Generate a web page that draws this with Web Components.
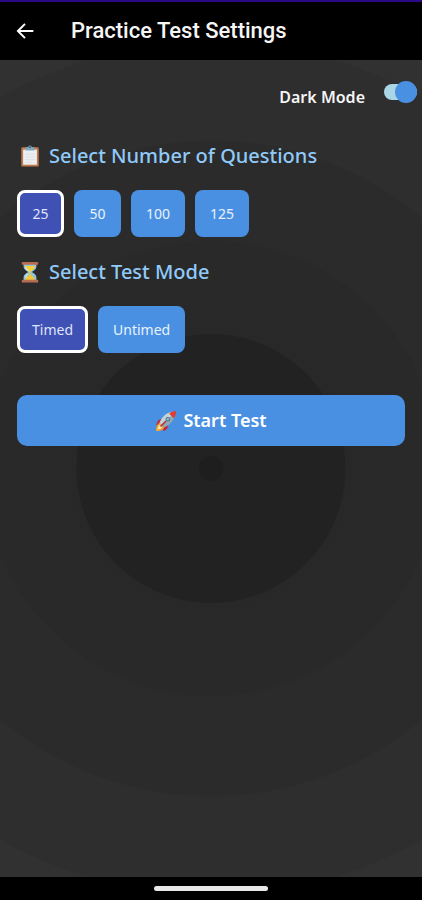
<!DOCTYPE html>
<html lang="en">
<head>
<meta charset="utf-8">
<meta name="viewport" content="width=device-width, initial-scale=1">
<title>Practice Test Settings</title>
<style>
html, body { margin: 0; }
body { font-family: "Noto Sans", "Open Sans", sans-serif; color: #fff; background: #000; }
</style>
</head>
<body>
<settings-screen></settings-screen>
<script>
const define = (name, html, setup) => {
  const template = document.createElement('template');
  template.innerHTML = html;
  customElements.define(name, class extends HTMLElement {
    connectedCallback() {
      if (this.shadowRoot) return;
      const root = this.attachShadow({ mode: 'open' });
      root.append(template.content.cloneNode(true));
      if (setup) setup(this, root);
    }
  });
};

const icons = {
  back: '<path d="M22 12H4M12 3.500L3.500 12L12 20.500" fill="none" stroke="#fff" stroke-width="2.400"/>',
  clipboard: '<rect x="2.500" y="2.500" width="19" height="21" rx="1.500" fill="#c27a4d"/><path d="M4.500 5h15v16.500h-15z" fill="#eceff1"/><path d="M7 10h10M7 13h10M7 16h10M7 19h7" stroke="#d5dadd" stroke-width=".8"/><path d="M7 6V3.500q0-1 1-1h2a2 2 0 0 1 4 0h2q1 0 1 1V6z" fill="#7fa9bd"/><circle cx="12" cy="2.300" r="1" fill="#345"/>',
  hourglass: '<path d="M5 3h14v3c0 3-2 4-5 6 3 2 5 3 5 6v3H5v-3c0-3 2-4 5-6-3-2-5-3-5-6z" fill="#8ec5d8"/><path d="M6.500 5.500h11c0 3-3 4-5 6.500h-1c-2-2.500-5-3.500-5-6.500z" fill="#f7cf3d"/><path d="M11.500 12h1l.8 4c2 1 4 2 4 4.500H6.700c0-2.500 2-3.500 4-4.500z" fill="#fbc52d"/><path d="M7 7c1 2 2 3 3.500 4M7 18c.5-2 1.500-3 3-4" fill="none" stroke="#d3f1f7" stroke-width="1.200"/><rect x="3" y="1" width="18" height="3" rx="1" fill="#b76d51"/><rect x="3" y="20.500" width="18" height="3" rx="1" fill="#b76d51"/>',
  rocket: '<path d="M8 10c-4-.5-6 3-6.500 7l5-2z" fill="#c62839"/><path d="M14 16c.5 4-2 6-5 7l-.5-5z" fill="#c62839"/><path d="M5.500 14c-3 1-4.500 4-4.500 9 4 0 8-1 9-4z" fill="#f4a02c"/><path d="M5.500 16c-2 1-2.500 3-2.800 5.200 2 0 4.300-.7 5.300-2.700z" fill="#ffe6a0"/><path d="M5 14C8 7 13 2 22 2c0 9-5 14-12 17z" fill="#8fa9b4"/><path d="M5 14C8 7 13 2 22 2L7.500 16.500z" fill="#c3d3d9"/><path d="M15.500 4c2-2 4.500-3 7.500-3 0 3-.8 5.500-2.500 8z" fill="#e23b30"/><circle cx="14" cy="10" r="2.400" fill="#536b79"/><circle cx="14" cy="10" r="1.300" fill="#87c8e8"/><path d="M12 12L6 18" stroke="#b92d3c" stroke-width="1.800"/>'
};

define('ui-icon', `<style>
  :host { display: inline-flex; flex: none; width: 22px; height: 22px; }
  svg { width: 100%; height: 100%; }
</style><svg viewBox="0 0 24 24" aria-hidden="true"></svg>`,
(host, root) => { root.querySelector('svg').innerHTML = icons[host.getAttribute('name')]; });

define('app-bar', `<style>
  :host { display: flex; align-items: center; gap: 36px; height: 58px; padding: 0 15px; background: #000; border-top: 2px solid #2a0a85; }
  button { display: flex; padding: 0; border: 0; background: none; }
  ui-icon { width: 20px; height: 20px; }
  h1 { margin: 0; font: 500 22px/28px Roboto, sans-serif; color: #f5f5f5; }
</style><button type="button" aria-label="Back"><ui-icon name="back"></ui-icon></button><h1><slot></slot></h1>`);

define('mode-switch', `<style>
  :host { display: flex; justify-content: flex-end; }
  label { display: flex; align-items: center; gap: 19px; font-size: 16px; line-height: 24px; font-weight: 600; color: #f5f5f5; }
  input { appearance: none; display: flex; align-items: center; justify-content: flex-end; width: 33px; height: 16px; margin: 0 0 10px; border-radius: 8px; background: #a9d5e5; }
  input::before { content: ""; flex: none; width: 22px; height: 22px; border-radius: 50%; background: #4a90e2; }
  input:not(:checked) { justify-content: flex-start; }
</style><label><slot></slot><input type="checkbox" role="switch" checked></label>`);

define('option-group', `<style>
  :host { display: block; }
  h2 { display: flex; align-items: center; gap: 8px; margin: 0 0 18px; padding-left: 2px; font-size: 20px; line-height: 32px; font-weight: 500; color: #90caf9; }
  div { display: flex; flex-wrap: wrap; gap: 10px; }
</style><h2><ui-icon></ui-icon><span></span></h2><div role="group"><slot></slot></div>`,
(host, root) => {
  const icon = document.createElement('ui-icon');
  icon.setAttribute('name', host.getAttribute('icon'));
  root.querySelector('ui-icon').replaceWith(icon);
  root.querySelector('span').textContent = host.getAttribute('heading');
  root.querySelector('div').setAttribute('aria-label', host.getAttribute('heading'));
  host.addEventListener('click', e => {
    const picked = e.target.closest('option-chip');
    if (picked) host.querySelectorAll('option-chip').forEach(c => c.toggleAttribute('selected', c === picked));
  });
});

define('option-chip', `<style>
  :host { display: block; }
  button { display: block; box-sizing: border-box; min-width: 47px; min-height: 47px; padding: 10px 15px; border: 0; border-radius: 8px; background: #4a90e2; color: #e9f2fd; font: inherit; font-size: 14px; line-height: 20px; }
  :host([selected]) button { padding: 10px 12px; border: 3px solid #fff; background: #3f51b5; color: #dfe3fa; }
</style><button type="button"><slot></slot></button>`);

define('start-button', `<style>
  :host { display: block; }
  button { display: flex; align-items: center; justify-content: center; gap: 6px; width: 100%; padding: 12px; border: 0; border-radius: 10px; background: #4a90e2; color: #fff; font: inherit; font-size: 18px; line-height: 27px; font-weight: 600; }
</style><button type="button"><ui-icon name="rocket"></ui-icon><slot></slot></button>`);

define('settings-screen', `<style>
  :host { display: flex; flex-direction: column; min-height: 100vh; }
  main { flex: 1; padding: 24px 17px; background: radial-gradient(circle at 50% 50%, #1e1e1e 12px, #222 13px, #222 134px, #282828 135px, #292929 227px, #2b2b2b 229px, #2b2b2b 327px, #2e2e2e 329px, #2e2e2e 426px, #313131 428px); }
  mode-switch { margin: 0 -12px 30px 0; }
  option-group { margin-bottom: 19px; }
  start-button { margin-top: 42px; }
  footer { display: flex; align-items: center; justify-content: center; height: 23px; background: #000; }
  footer span { width: 27%; height: 5px; border-radius: 3px; background: #e8e8e8; }
</style>
<app-bar>Practice Test Settings</app-bar>
<main>
  <mode-switch>Dark Mode</mode-switch>
  <option-group icon="clipboard" heading="Select Number of Questions">
    <option-chip selected>25</option-chip><option-chip>50</option-chip><option-chip>100</option-chip><option-chip>125</option-chip>
  </option-group>
  <option-group icon="hourglass" heading="Select Test Mode">
    <option-chip selected>Timed</option-chip><option-chip>Untimed</option-chip>
  </option-group>
  <start-button>Start Test</start-button>
</main>
<footer><span></span></footer>`);
</script>
</body>
</html>
